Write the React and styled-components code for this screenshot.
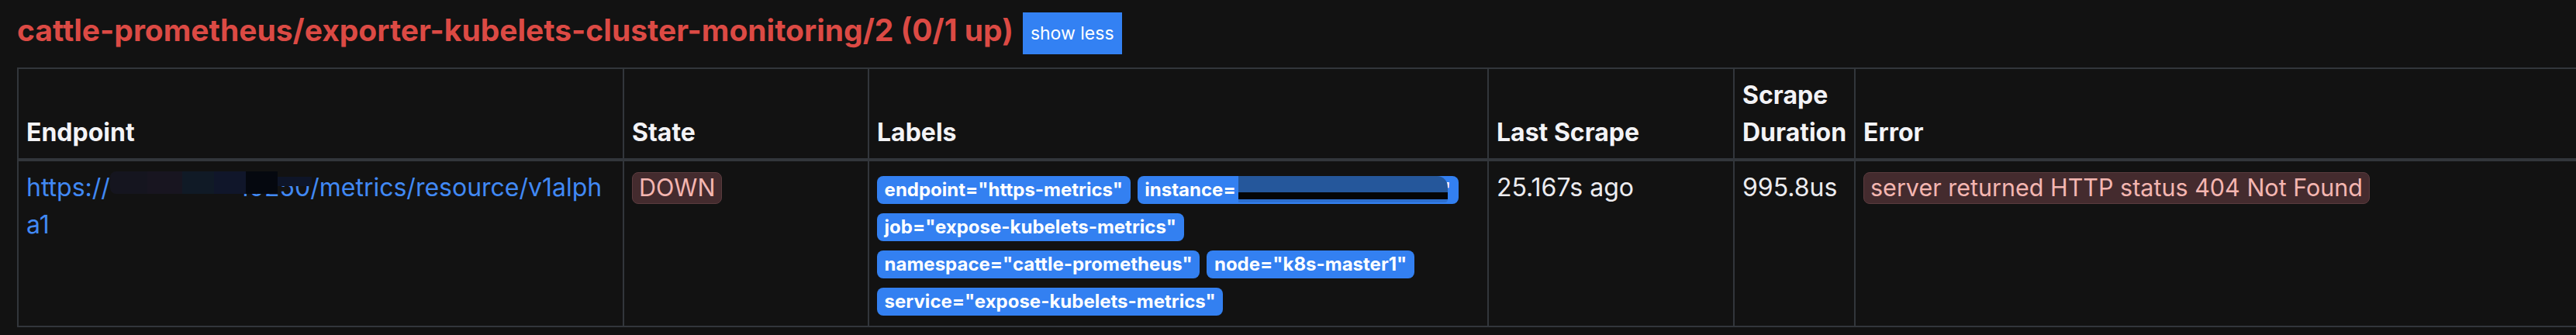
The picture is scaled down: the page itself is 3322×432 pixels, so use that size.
import React from "react";
import styled, { createGlobalStyle } from "styled-components";

const Global = createGlobalStyle`
  html, body { margin: 0; padding: 0; background: #121212; }
  body { font-family: Inter, "Noto Sans", "Liberation Sans", sans-serif; color: #ececf0; }
`;

const Page = styled.div`
  padding: 0 0 0 22px;
  background: #121212;
  min-height: 432px;
  box-sizing: border-box;
`;

const Header = styled.div`
  display: flex;
  align-items: flex-start;
  gap: 12px;
  height: 87px;
  padding-top: 15px;
  box-sizing: border-box;
`;

const Title = styled.h2`
  margin: 0;
  font-size: 39px;
  line-height: 48px;
  font-weight: 700;
  color: #dc4a44;
  white-space: nowrap;
`;

const ToggleButton = styled.button`
  margin-top: 1px;
  height: 54px;
  padding: 0 10px;
  border: none;
  border-radius: 0;
  background: #3381f3;
  color: #fff;
  font-family: inherit;
  font-size: 23px;
  line-height: 54px;
  cursor: pointer;
`;

const Table = styled.table`
  width: 3300px;
  table-layout: fixed;
  border-collapse: collapse;
  border: 2px solid #32363b;
`;

const Col = styled.col`
  width: ${(p) => p.$w}px;
`;

const Th = styled.th`
  border: 2px solid #32363b;
  border-bottom: 4px solid #32363b;
  padding: 10px 10px 9px;
  text-align: left;
  vertical-align: bottom;
  font-size: 32px;
  line-height: 48px;
  font-weight: 700;
  color: #f3f3f6;
`;

const Td = styled.td`
  border: 2px solid #32363b;
  padding: 10px;
  vertical-align: top;
  font-size: 32px;
  line-height: 48px;
  color: #ececf0;
  word-break: ${(p) => (p.$breakAll ? "break-all" : "normal")};
`;

const EndpointLink = styled.a`
  color: #4189f4;
  text-decoration: none;
`;

const Redaction = styled.span`
  display: inline-block;
  position: relative;
  width: ${(p) => p.$w}px;
  height: 0;
  vertical-align: baseline;
  &::after {
    content: "";
    position: absolute;
    left: ${(p) => p.$left || 0}px;
    width: ${(p) => p.$blobW}px;
    bottom: ${(p) => p.$bottom}px;
    height: ${(p) => p.$h}px;
    background: ${(p) => p.$bg};
    border-radius: ${(p) => p.$radius || 0};
  }
  &::before {
    content: ${(p) => (p.$tail ? '""' : "none")};
    position: absolute;
    left: ${(p) => p.$tailLeft || 0}px;
    width: ${(p) => p.$tailW || 0}px;
    bottom: ${(p) => p.$tailBottom || 0}px;
    height: ${(p) => p.$tailH || 0}px;
    background: ${(p) => p.$tailBg || "transparent"};
  }
`;

const StateBadge = styled.span`
  display: inline-block;
  font-size: 30.5px;
  line-height: 1;
  padding: 4px 8px;
  border: 1px solid #5a3b3e;
  border-radius: 8px;
  background: #442b2e;
  color: #f4b6b1;
  vertical-align: baseline;
`;

const Label = styled.span`
  display: inline-block;
  font-size: 24px;
  line-height: 1;
  font-weight: 700;
  padding: 6px 9.6px;
  border-radius: 8px;
  background: #3380f1;
  color: #fff;
  white-space: nowrap;
  vertical-align: baseline;
`;

const labels = [
  { text: 'endpoint="https-metrics"' },
  { text: "instance=", hidden: true },
  { text: 'job="expose-kubelets-metrics"' },
  { text: 'namespace="cattle-prometheus"' },
  { text: 'node="k8s-master1"' },
  { text: 'service="expose-kubelets-metrics"' },
];

export default function App() {
  return (
    <>
      <Global />
      <Page>
        <Header>
          <Title>cattle-prometheus/exporter-kubelets-cluster-monitoring/2 (0/1 up)</Title>
          <ToggleButton>show less</ToggleButton>
        </Header>
        <Table>
          <colgroup>
            <Col $w={781} />
            <Col $w={316} />
            <Col $w={799} />
            <Col $w={317} />
            <Col $w={156} />
            <Col $w={931} />
          </colgroup>
          <thead>
            <tr>
              <Th>Endpoint</Th>
              <Th>State</Th>
              <Th>Labels</Th>
              <Th>Last Scrape</Th>
              <Th>Scrape Duration</Th>
              <Th>Error</Th>
            </tr>
          </thead>
          <tbody>
            <tr>
              <Td $breakAll>
                <EndpointLink href="#">
                  https://
                  <Redaction
                    $w={166}
                    $blobW={216}
                    $bottom={3}
                    $h={29}
                    $radius="8px 0 0 8px"
                    $bg="linear-gradient(to right, #15151f 0 22%, #181520 22% 43%, #101a26 43% 62%, #10162a 62% 81%, #05080f 81% 100%)"
                    $tail
                    $tailLeft={216}
                    $tailW={44}
                    $tailBottom={13}
                    $tailH={12}
                    $tailBg="#0e1528"
                  />
                  10250/metrics/resource/v1alpha1
                </EndpointLink>
              </Td>
              <Td>
                <StateBadge>DOWN</StateBadge>
              </Td>
              <Td>
                {labels.map((l, i) => (
                  <React.Fragment key={i}>
                    <Label>
                      {l.text}
                      {l.hidden && (
                        <>
                          <Redaction
                            $w={264}
                            $left={3}
                            $blobW={270}
                            $bottom={-8}
                            $h={34}
                            $radius="0 14px 4px 0"
                            $bg="linear-gradient(to bottom, #25579b 0 62%, #050505 62% 88%, #2c6fd0 88% 100%)"
                          />
                          "
                        </>
                      )}
                    </Label>{" "}
                  </React.Fragment>
                ))}
              </Td>
              <Td>25.167s ago</Td>
              <Td>995.8us</Td>
              <Td>
                <StateBadge>server returned HTTP status 404 Not Found</StateBadge>
              </Td>
            </tr>
          </tbody>
        </Table>
      </Page>
    </>
  );
}
